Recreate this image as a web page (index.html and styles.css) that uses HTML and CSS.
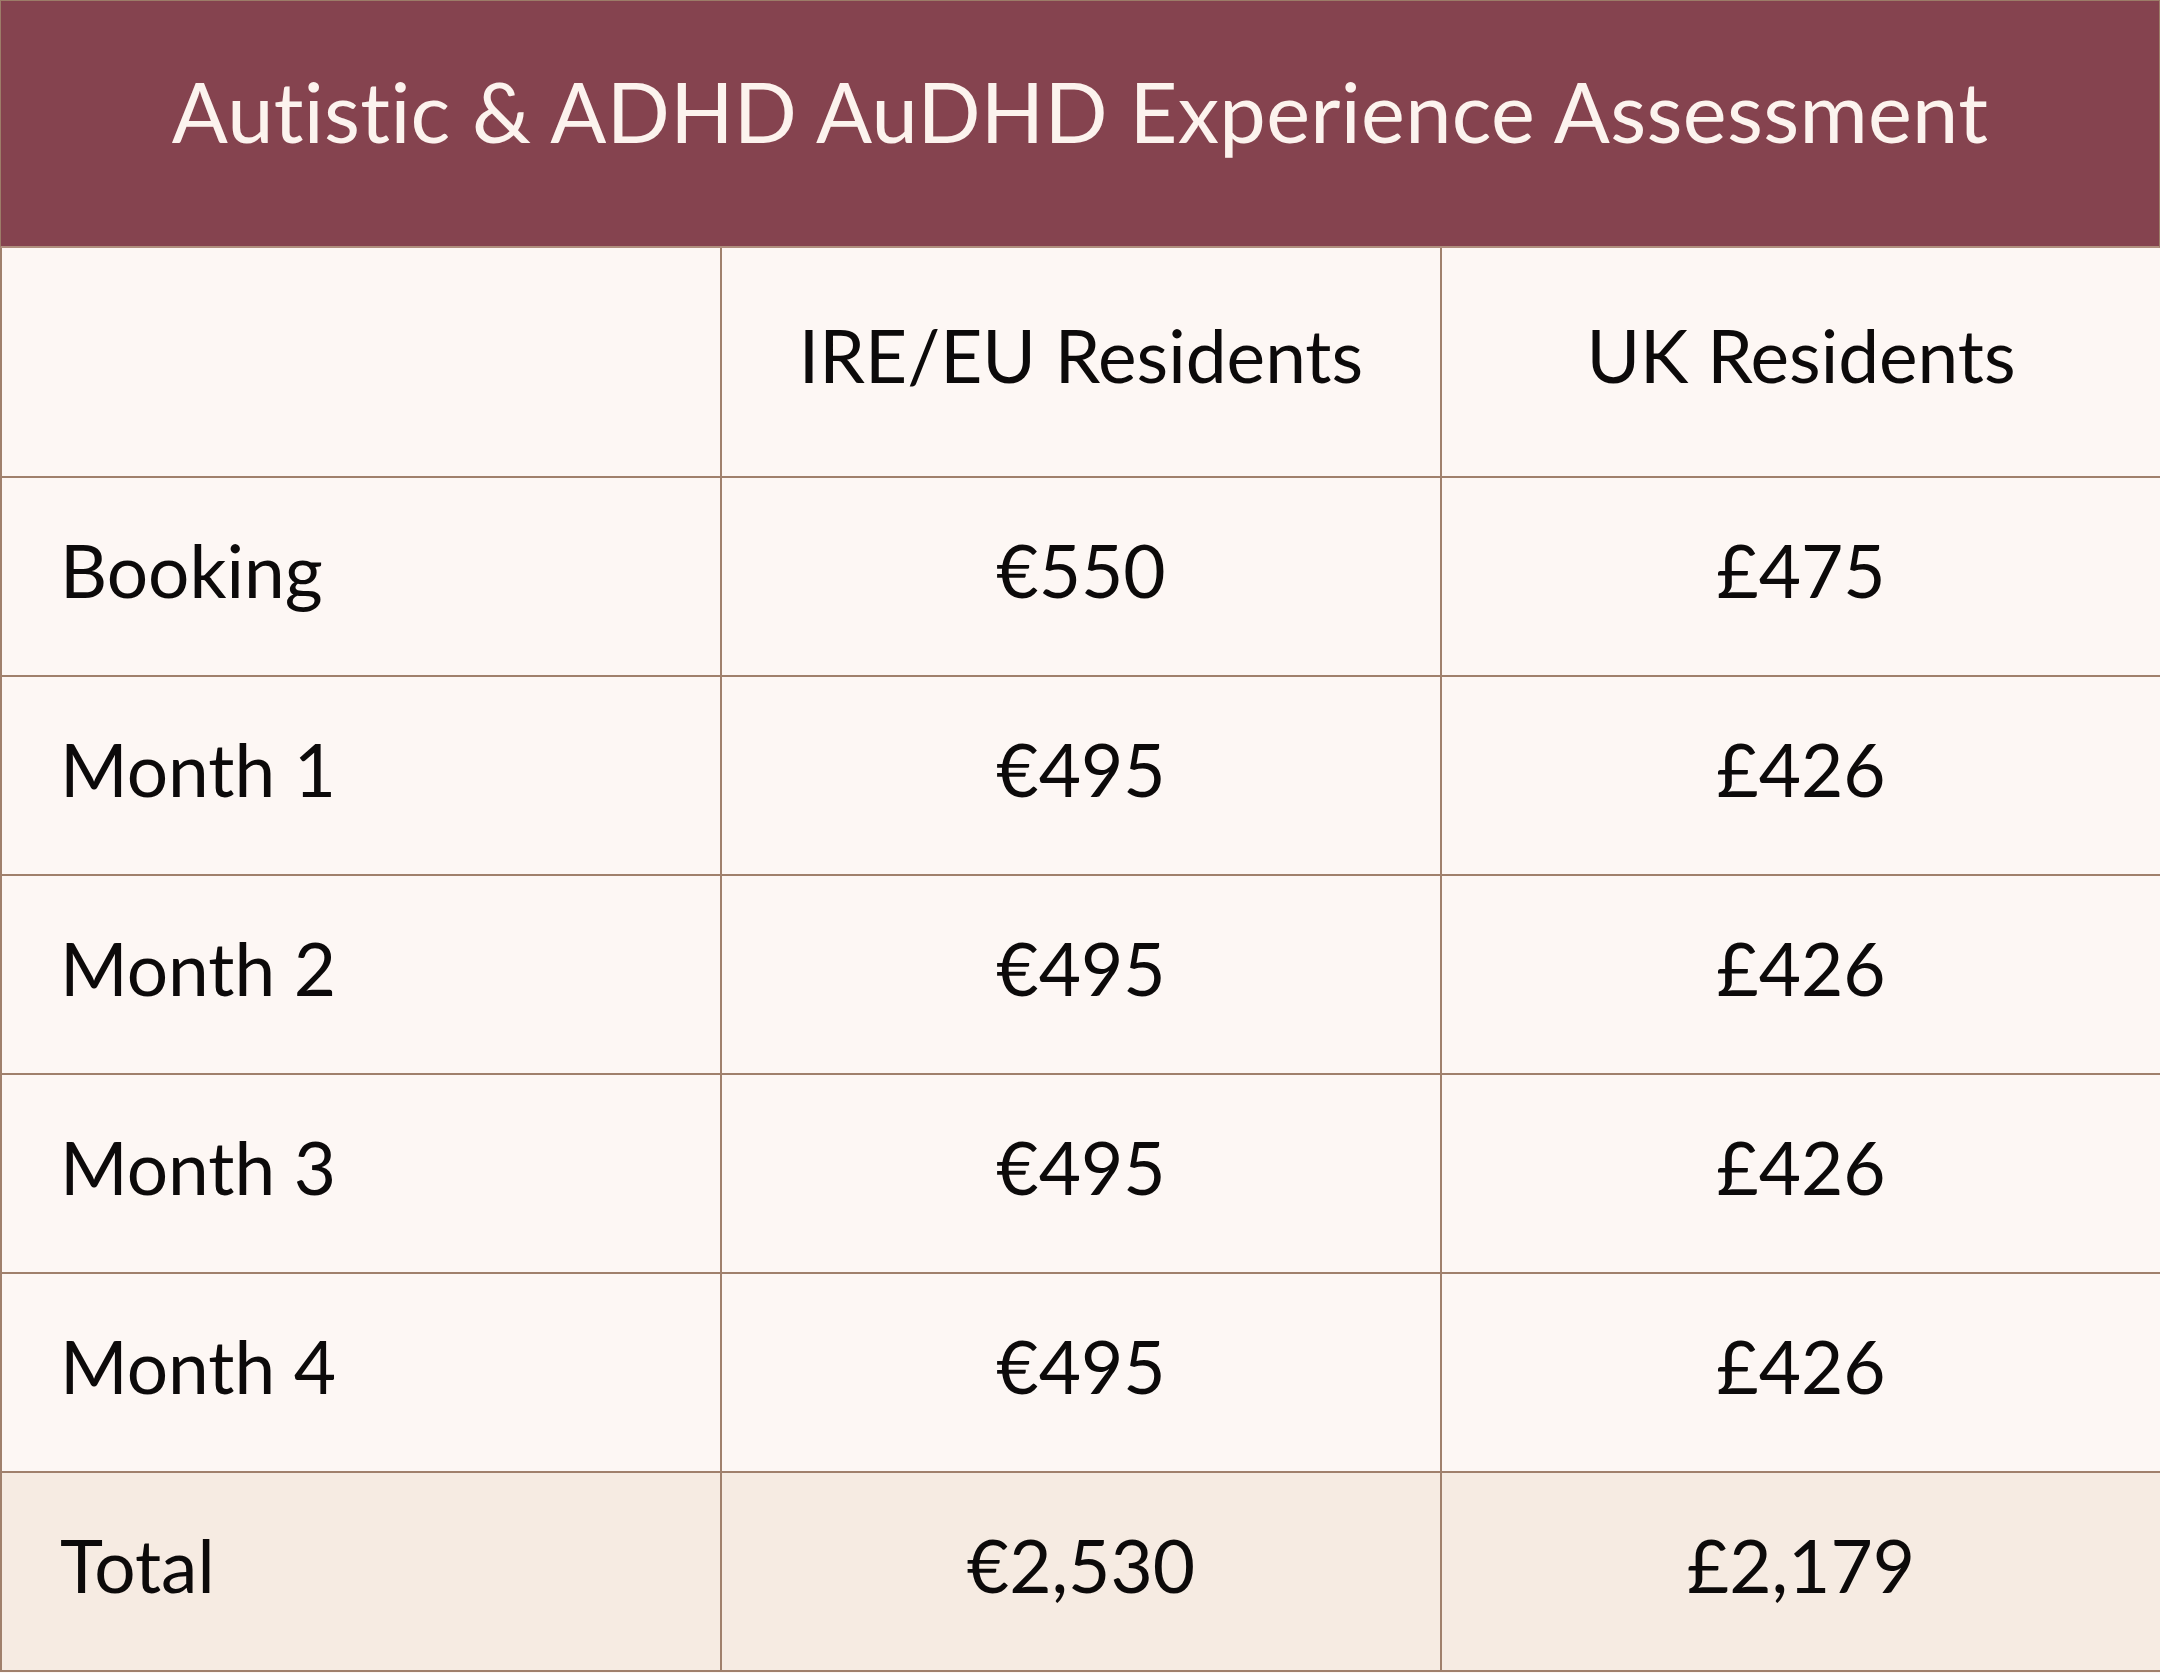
FILE: index.html
```html
<!DOCTYPE html>
<html lang="en">
<head>
<meta charset="utf-8">
<title>Autistic &amp; ADHD AuDHD Experience Assessment</title>
<link rel="stylesheet" href="styles.css">
</head>
<body>
<div class="pricing">
  <div class="pricing-title">Autistic &amp; ADHD AuDHD Experience Assessment</div>
  <table class="pricing-table">
    <colgroup><col class="c1"><col class="c2"><col class="c3"></colgroup>
    <tr class="head-row"><td></td><td class="center">IRE/EU Residents</td><td class="center">UK Residents</td></tr>
    <tr><td class="label">Booking</td><td class="center">€550</td><td class="center">£475</td></tr>
    <tr><td class="label">Month 1</td><td class="center">€495</td><td class="center">£426</td></tr>
    <tr><td class="label">Month 2</td><td class="center">€495</td><td class="center">£426</td></tr>
    <tr><td class="label">Month 3</td><td class="center">€495</td><td class="center">£426</td></tr>
    <tr><td class="label">Month 4</td><td class="center">€495</td><td class="center">£426</td></tr>
    <tr class="total-row"><td class="label">Total</td><td class="center">€2,530</td><td class="center">£2,179</td></tr>
  </table>
</div>
</body>
</html>
```

FILE: styles.css
```css
html, body {
  margin: 0;
  padding: 0;
  background: #fdf7f4;
}
.pricing {
  width: 2160px;
  font-family: Lato, "Open Sans", sans-serif;
  color: #0c0a0a;
}
.pricing-title {
  box-sizing: border-box;
  height: 248px;
  background: #85434f;
  color: #fcf3ee;
  border: 1px solid #9c7c68;
  border-bottom: 2px solid #b08f7e;
  display: flex;
  align-items: center;
  justify-content: center;
  padding-bottom: 26px;
  font-size: 83px;
  letter-spacing: 0.3px;
}
.pricing-table {
  width: 2160px;
  border-collapse: collapse;
  table-layout: fixed;
  font-size: 73px;
}
.pricing-table col { width: 720px; }
.pricing-table td {
  border: 2px solid #a0806c;
  border-top: none;
  background: #fdf7f4;
  height: 199px;
  padding: 0 0 14px 0;
  box-sizing: border-box;
  vertical-align: middle;
}
.pricing-table .head-row td { height: 229px; }
.pricing-table .total-row td { background: #f6ebe2; }
.pricing-table td.label { padding-left: 58px; }
.pricing-table td.center { text-align: center; }
```
